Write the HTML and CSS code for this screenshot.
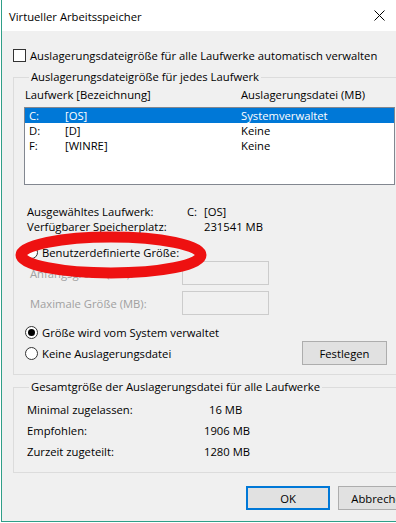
FILE: index.html
```html
<!DOCTYPE html>
<html lang="de">
<head>
  <meta charset="UTF-8">
  <meta name="viewport" content="width=device-width, initial-scale=1.0">
  <title>Virtueller Arbeitsspeicher</title>
  <link rel="stylesheet" href="styles.css">
</head>
<body>
  <div class="window">
    <!-- Title bar -->
    <div class="titlebar">
      <span class="title">Virtueller Arbeitsspeicher</span>
      <span class="close">
        <svg width="11" height="11" viewBox="0 0 11 11"><path d="M0.5 0.5 L10.5 10.5 M10.5 0.5 L0.5 10.5" stroke="#000" stroke-width="1" fill="none"/></svg>
      </span>
    </div>

    <div class="content">
      <div class="check-row"><span class="checkbox"></span>Auslagerungsdateigröße für alle Laufwerke automatisch verwalten</div>

      <!-- Per drive settings -->
      <fieldset class="group group-drives">
        <legend>Auslagerungsdateigröße für jedes Laufwerk</legend>
        <div class="list-head">
          <span class="col-name">Laufwerk [Bezeichnung]</span>
          <span>Auslagerungsdatei (MB)</span>
        </div>
        <div class="listbox">
          <div class="list-row selected"><span class="col-letter">C:</span><span class="col-label">[OS]</span><span>Systemverwaltet</span></div>
          <div class="list-row"><span class="col-letter">D:</span><span class="col-label">[D]</span><span>Keine</span></div>
          <div class="list-row"><span class="col-letter">F:</span><span class="col-label">[WINRE]</span><span>Keine</span></div>
        </div>

        <div class="info">
          <span>Ausgewähltes Laufwerk:</span><span>C:</span><span>[OS]</span>
          <span>Verfügbarer Speicherplatz:</span><span></span><span>231541 MB</span>
        </div>

        <div class="radio-row row-custom"><span class="radio"></span>Benutzerdefinierte Größe:</div>
        <div class="size-row">
          <span class="size-label">Anfangsgröße (MB):</span>
          <span class="textbox"></span>
        </div>
        <div class="size-row">
          <span class="size-label">Maximale Größe (MB):</span>
          <span class="textbox"></span>
        </div>
        <div class="radio-row row-system"><span class="radio checked"></span>Größe wird vom System verwaltet</div>
        <div class="radio-row row-none">
          <span class="radio"></span>Keine Auslagerungsdatei
          <button class="btn btn-set">Festlegen</button>
        </div>
      </fieldset>

      <!-- Totals -->
      <fieldset class="group group-total">
        <legend>Gesamtgröße der Auslagerungsdatei für alle Laufwerke</legend>
        <div class="totals">
          <span>Minimal zugelassen:</span><span class="val-min">16 MB</span>
          <span>Empfohlen:</span><span>1906 MB</span>
          <span>Zurzeit zugeteilt:</span><span>1280 MB</span>
        </div>
      </fieldset>

      <div class="buttons">
        <button class="btn btn-default">OK</button>
        <button class="btn">Abbrechen</button>
      </div>
    </div>

    <!-- red hand drawn marker -->
    <svg class="marker" width="220" height="70" viewBox="0 0 220 70">
      <ellipse cx="109" cy="35" rx="90" ry="18" fill="none" stroke="#ee1111" stroke-width="11"/>
    </svg>
  </div>
</body>
</html>
```

FILE: styles.css
```css
/* Reset */
* {
  margin: 0;
  padding: 0;
  box-sizing: border-box;
}

body {
  background: #fff;
  overflow: hidden;
  font-family: "Segoe UI", "Open Sans", sans-serif;
  font-size: 11.25px;
  color: #000;
}

/* Window frame */
.window {
  position: relative;
  margin-left: 1px;
  width: 434px;
  height: 522px;
  background: #f0f0f0;
  border-left: 1px solid #2f9e88;
  border-bottom: 1px solid #2f9e88;
}

.titlebar {
  display: flex;
  align-items: center;
  height: 31px;
  background: #fff;
}

.title {
  padding-left: 7px;
  padding-top: 1px;
}

.close {
  display: flex;
  justify-content: center;
  width: 46px;
  margin-left: auto;
  margin-right: 33px;
}

.content {
  padding: 0 13px 0 11px;
}

/* Checkbox */
.check-row {
  display: flex;
  align-items: center;
  height: 13px;
  margin-top: 18px;
}

.checkbox {
  width: 13px;
  height: 13px;
  margin-right: 4px;
  background: #fff;
  border: 1px solid #333;
}

/* Group boxes */
.group {
  min-width: 0;
  border: 1px solid #dcdcdc;
  padding: 4px 34px 9px 10px;
  margin-top: 8px;
}

.group legend {
  margin-left: 5px;
  padding: 0 2px;
  line-height: 14px;
}

.group-total {
  margin-top: 5px;
  padding-top: 5px;
  padding-bottom: 10px;
}

/* Drive list */
.list-head {
  display: flex;
  height: 14px;
  line-height: 14px;
  padding-left: 1px;
}

.list-head .col-name {
  width: 216px;
}

.listbox {
  width: 371px;
  height: 78px;
  margin-top: 5px;
  background: #fff;
  border: 1px solid #828790;
}

.list-row {
  display: flex;
  height: 15px;
  line-height: 15px;
  padding-left: 4px;
}

.list-row.selected {
  background: #0078d7;
  color: #fff;
}

.col-letter {
  width: 36px;
}

.col-label {
  width: 176px;
}

/* Selected drive info */
.info {
  display: grid;
  grid-template-columns: 160px 17px auto;
  grid-auto-rows: 15px;
  align-items: center;
  margin-top: 19px;
  padding-left: 3px;
  line-height: 15px;
}

/* Radio buttons */
.radio-row {
  display: flex;
  align-items: center;
  height: 14px;
  padding-left: 1px;
}

.radio {
  display: flex;
  align-items: center;
  justify-content: center;
  width: 13px;
  height: 13px;
  margin-right: 4px;
  background: #fff;
  border: 1px solid #333;
  border-radius: 50%;
}

.radio.checked::after {
  content: "";
  width: 7px;
  height: 7px;
  background: #000;
  border-radius: 50%;
}

.row-custom {
  margin-top: 11px;
}

.row-system {
  margin-top: 10px;
}

.row-none {
  height: 24px;
  margin-top: 2px;
}

/* Size inputs (disabled) */
.size-row {
  display: flex;
  align-items: center;
  height: 24px;
  margin-top: 6px;
  color: #a0a0a0;
}

.row-custom + .size-row {
  margin-top: 2px;
}

.size-label {
  width: 158px;
  padding-left: 6px;
}

.textbox {
  width: 87px;
  height: 24px;
  border: 1px solid #cccccc;
  background: #f0f0f0;
}

/* Totals */
.totals {
  display: grid;
  grid-template-columns: 177px auto;
  grid-auto-rows: 21px;
  align-items: center;
  padding-left: 3px;
}

.val-min {
  padding-left: 5px;
}

/* Buttons */
.btn {
  height: 24px;
  width: 85px;
  font: inherit;
  color: #000;
  background: #e1e1e1;
  border: 1px solid #adadad;
}

.btn-set {
  margin-left: auto;
}

.buttons {
  display: flex;
  justify-content: flex-end;
  gap: 8px;
  margin-top: 13px;
}

.buttons .btn {
  width: 84px;
}

.btn-default {
  border: 2px solid #0078d7;
}

/* Annotation */
.marker {
  position: absolute;
  left: 0;
  top: 220px;
}
```
